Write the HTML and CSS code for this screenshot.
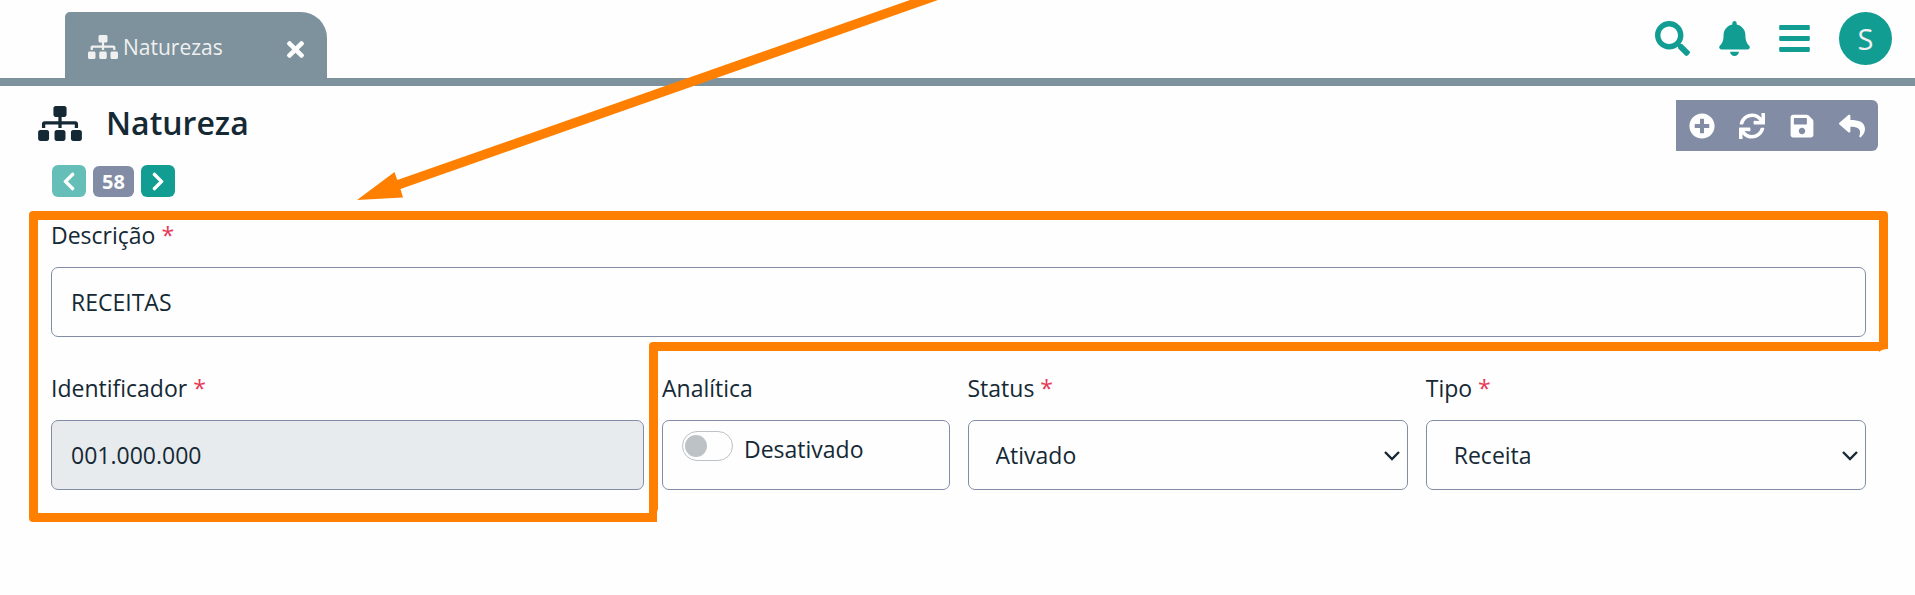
FILE: index.html
```html
<!DOCTYPE html>
<html lang="pt-BR">
<head>
<meta charset="utf-8">
<meta name="viewport" content="width=device-width, initial-scale=1">
<title>Natureza</title>
<link rel="stylesheet" href="styles.css">
</head>
<body>
<svg class="sprite" aria-hidden="true">
  <symbol id="i-sitemap" viewBox="0 0 640 512"><path d="M128 352H32c-17.67 0-32 14.33-32 32v96c0 17.67 14.33 32 32 32h96c17.67 0 32-14.33 32-32v-96c0-17.67-14.33-32-32-32zm-24-80h192v48h48v-48h192v48h48v-57.59c0-21.17-17.23-38.41-38.41-38.41H344v-64h40c17.67 0 32-14.33 32-32V32c0-17.67-14.33-32-32-32H256c-17.67 0-32 14.33-32 32v96c0 17.67 14.33 32 32 32h40v64H94.41C73.23 224 56 241.23 56 262.41V320h48v-48zm264 80h-96c-17.67 0-32 14.33-32 32v96c0 17.67 14.33 32 32 32h96c17.67 0 32-14.33 32-32v-96c0-17.67-14.33-32-32-32zm240 0h-96c-17.67 0-32 14.33-32 32v96c0 17.67 14.33 32 32 32h96c17.67 0 32-14.33 32-32v-96c0-17.67-14.33-32-32-32z"/></symbol>
  <symbol id="i-times" viewBox="0 0 352 512"><path d="M242.72 256l100.07-100.07c12.28-12.28 12.28-32.19 0-44.48l-22.24-22.24c-12.28-12.28-32.19-12.28-44.48 0L176 189.28 75.93 89.21c-12.28-12.28-32.19-12.28-44.48 0L9.21 111.45c-12.28 12.28-12.28 32.19 0 44.48L109.28 256 9.21 356.07c-12.28 12.28-12.28 32.19 0 44.48l22.24 22.24c12.28 12.28 32.2 12.28 44.48 0L176 322.72l100.07 100.07c12.28 12.28 32.2 12.28 44.48 0l22.24-22.24c12.28-12.28 12.28-32.19 0-44.48L242.72 256z"/></symbol>
  <symbol id="i-search" viewBox="0 0 512 512"><path d="M505 442.7L405.3 343c-4.5-4.5-10.6-7-17-7H372c27.6-35.3 44-79.7 44-128C416 93.1 322.9 0 208 0S0 93.1 0 208s93.1 208 208 208c48.3 0 92.7-16.4 128-44v16.3c0 6.4 2.5 12.5 7 17l99.7 99.7c9.4 9.4 24.6 9.4 33.9 0l28.3-28.3c9.4-9.4 9.4-24.6.1-34zM208 336c-70.7 0-128-57.2-128-128 0-70.7 57.2-128 128-128 70.7 0 128 57.2 128 128 0 70.7-57.2 128-128 128z"/></symbol>
  <symbol id="i-bell" viewBox="0 0 448 512"><path d="M224 512c35.32 0 63.97-28.65 63.97-64H160.03c0 35.35 28.65 64 63.97 64zm215.39-149.71c-19.32-20.76-55.47-51.99-55.47-154.29 0-77.7-54.48-139.9-127.94-155.16V32c0-17.67-14.32-32-31.98-32s-31.98 14.33-31.98 32v20.84C118.56 68.1 64.08 130.3 64.08 208c0 102.3-36.15 133.53-55.47 154.29-6 6.45-8.66 14.16-8.61 21.71.11 16.4 12.98 32 32.1 32h383.8c19.12 0 32-15.6 32.1-32 .05-7.55-2.61-15.27-8.61-21.71z"/></symbol>
  <symbol id="i-bars" viewBox="0 0 448 512"><path d="M16 132h416c8.837 0 16-7.163 16-16V76c0-8.837-7.163-16-16-16H16C7.163 60 0 67.163 0 76v40c0 8.837 7.163 16 16 16zm0 160h416c8.837 0 16-7.163 16-16v-40c0-8.837-7.163-16-16-16H16c-8.837 0-16 7.163-16 16v40c0 8.837 7.163 16 16 16zm0 160h416c8.837 0 16-7.163 16-16v-40c0-8.837-7.163-16-16-16H16c-8.837 0-16 7.163-16 16v40c0 8.837 7.163 16 16 16z"/></symbol>
  <symbol id="i-plus" viewBox="0 0 512 512"><path d="M256 8C119 8 8 119 8 256s111 248 248 248 248-111 248-248S393 8 256 8zm144 276c0 6.6-5.4 12-12 12h-92v92c0 6.6-5.4 12-12 12h-56c-6.6 0-12-5.4-12-12v-92h-92c-6.6 0-12-5.4-12-12v-56c0-6.6 5.4-12 12-12h92v-92c0-6.6 5.4-12 12-12h56c6.6 0 12 5.4 12 12v92h92c6.6 0 12 5.4 12 12v56z"/></symbol>
  <symbol id="i-sync" viewBox="0 0 512 512"><path d="M440.65 12.57l4 82.77A247.16 247.16 0 0 0 255.83 8C134.73 8 33.91 94.92 12.29 209.82A12 12 0 0 0 24.09 224h49.05a12 12 0 0 0 11.67-9.26 175.91 175.91 0 0 1 317-56.94l-101.46-4.86a12 12 0 0 0-12.57 12v47.41a12 12 0 0 0 12 12H500a12 12 0 0 0 12-12V12a12 12 0 0 0-12-12h-47.37a12 12 0 0 0-11.98 12.57zM255.83 432a175.61 175.61 0 0 1-146-77.8l101.8 4.87a12 12 0 0 0 12.57-12v-47.4a12 12 0 0 0-12-12H12a12 12 0 0 0-12 12V500a12 12 0 0 0 12 12h47.35a12 12 0 0 0 12-12.6l-4.15-82.57A247.17 247.17 0 0 0 255.83 504c121.11 0 221.93-86.92 243.55-201.82a12 12 0 0 0-11.8-14.18h-49.05a12 12 0 0 0-11.67 9.26A175.86 175.86 0 0 1 255.83 432z"/></symbol>
  <symbol id="i-save" viewBox="0 0 448 512"><path d="M433.941 129.941l-83.882-83.882A48 48 0 0 0 316.118 32H48C21.49 32 0 53.49 0 80v352c0 26.51 21.49 48 48 48h352c26.51 0 48-21.49 48-48V163.882a48 48 0 0 0-14.059-33.941zM224 416c-35.346 0-64-28.654-64-64 0-35.346 28.654-64 64-64s64 28.654 64 64c0 35.346-28.654 64-64 64zm96-304.52V212c0 6.627-5.373 12-12 12H76c-6.627 0-12-5.373-12-12V108c0-6.627 5.373-12 12-12h228.52c3.183 0 6.235 1.264 8.485 3.515l3.48 3.48A11.996 11.996 0 0 1 320 111.48z"/></symbol>
  <symbol id="i-reply" viewBox="0 0 512 512"><path d="M8.309 189.836L184.313 37.851C199.719 24.546 224 35.347 224 56.015v80.053c160.629 1.839 288 34.032 288 186.258 0 61.441-39.581 122.309-83.333 154.132-13.653 9.931-33.111-2.533-28.077-18.631 45.344-145.012-21.507-183.51-176.59-185.742V360c0 20.7-24.3 31.453-39.687 18.164l-176.004-152c-11.071-9.562-11.086-26.753 0-36.328z"/></symbol>
  <symbol id="i-prev" viewBox="0 0 320 512"><path d="M34.52 239.03L228.87 44.69c9.37-9.37 24.57-9.37 33.94 0l22.67 22.67c9.36 9.36 9.37 24.52.04 33.9L131.49 256l154.02 154.75c9.34 9.38 9.32 24.54-.04 33.9l-22.67 22.67c-9.37 9.37-24.57 9.37-33.94 0L34.52 272.97c-9.37-9.37-9.37-24.57 0-33.94z"/></symbol>
  <symbol id="i-next" viewBox="0 0 320 512"><path transform="matrix(-1 0 0 1 320 0)" d="M34.52 239.03L228.87 44.69c9.37-9.37 24.57-9.37 33.94 0l22.67 22.67c9.36 9.36 9.37 24.52.04 33.9L131.49 256l154.02 154.75c9.34 9.38 9.32 24.54-.04 33.9l-22.67 22.67c-9.37 9.37-24.57 9.37-33.94 0L34.52 272.97c-9.37-9.37-9.37-24.57 0-33.94z"/></symbol>
  <symbol id="i-down" viewBox="0 0 16 10"><path d="M1 1l7 7 7-7" fill="none" stroke="currentColor" stroke-width="2.4"/></symbol>
</svg>

<header class="topbar">
  <div class="tab">
    <a class="tab-link" href="#"><svg class="tab-icon"><use href="#i-sitemap"/></svg>Naturezas</a>
    <button class="tab-close" type="button" aria-label="Fechar"><svg class="close-icon"><use href="#i-times"/></svg></button>
  </div>
  <nav class="tools">
    <button class="tool" type="button" aria-label="Pesquisar"><svg class="icon-wide"><use href="#i-search"/></svg></button>
    <button class="tool" type="button" aria-label="Notificações"><svg class="icon-slim"><use href="#i-bell"/></svg></button>
    <button class="tool" type="button" aria-label="Menu"><svg class="icon-slim"><use href="#i-bars"/></svg></button>
    <button class="avatar" type="button">S</button>
  </nav>
</header>

<main class="page">
  <div class="heading">
    <h1 class="title"><svg class="title-icon"><use href="#i-sitemap"/></svg>Natureza</h1>
    <div class="actions">
      <button class="action" type="button" aria-label="Adicionar"><svg class="action-icon"><use href="#i-plus"/></svg></button>
      <button class="action" type="button" aria-label="Atualizar"><svg class="action-icon"><use href="#i-sync"/></svg></button>
      <button class="action" type="button" aria-label="Salvar"><svg class="action-icon"><use href="#i-save"/></svg></button>
      <button class="action" type="button" aria-label="Voltar"><svg class="action-icon"><use href="#i-reply"/></svg></button>
    </div>
  </div>

  <div class="pager">
    <button class="page-btn page-btn-muted" type="button" aria-label="Anterior"><svg class="page-icon"><use href="#i-prev"/></svg></button>
    <span class="page-count">58</span>
    <button class="page-btn" type="button" aria-label="Próximo"><svg class="page-icon"><use href="#i-next"/></svg></button>
  </div>

  <form class="form">
    <div class="field field-full">
      <label class="label" for="descricao">Descrição <span class="req">*</span></label>
      <input class="control" id="descricao" type="text" value="RECEITAS">
    </div>
    <div class="field">
      <label class="label" for="identificador">Identificador <span class="req">*</span></label>
      <input class="control control-readonly" id="identificador" type="text" value="001.000.000" readonly>
    </div>
    <div class="field">
      <span class="label" id="analitica-label">Analítica</span>
      <div class="control switch-box">
        <input class="switch" id="analitica" type="checkbox" role="switch">
        <label class="switch-text" for="analitica">Desativado</label>
      </div>
    </div>
    <div class="field">
      <label class="label" for="status">Status <span class="req">*</span></label>
      <div class="select-wrap">
        <select class="control select" id="status"><option>Ativado</option><option>Desativado</option></select>
        <svg class="caret"><use href="#i-down"/></svg>
      </div>
    </div>
    <div class="field">
      <label class="label" for="tipo">Tipo <span class="req">*</span></label>
      <div class="select-wrap">
        <select class="control select" id="tipo"><option>Receita</option><option>Despesa</option></select>
        <svg class="caret"><use href="#i-down"/></svg>
      </div>
    </div>
  </form>
</main>

<svg class="callout" viewBox="0 0 1915 595" aria-hidden="true">
  <path class="callout-arrow" d="M357 200L394.500 172L397.300 180L910 0H938L400.500 189L403 197.500Z"/>
  <path class="callout-arrow" d="M33 211H1884Q1888 211 1888 215V349Q1882 349 1879 352V351H658V509L657 512V522H33Q29 522 29 518V215Q29 211 33 211ZM38 220V513H649V346Q649 342 653 342H1879V220Z"/>
</svg>
</body>
</html>
```
FILE: styles.css
```css
* {
  box-sizing: border-box;
}

body {
  position: relative;
  min-height: 100vh;
  margin: 0;
  background: #fefefe;
  color: #152935;
  font-family: "Segoe UI", "Open Sans", "Noto Sans", sans-serif;
  font-size: 23px;
  line-height: 36px;
}

button {
  margin: 0;
  padding: 0;
  border: 0;
  background: none;
  color: inherit;
  font: inherit;
  cursor: pointer;
}

svg {
  display: block;
  fill: currentColor;
}

.sprite {
  position: absolute;
  width: 0;
  height: 0;
}

/* Top bar */
.topbar {
  display: flex;
  justify-content: space-between;
  align-items: flex-start;
  padding: 12px 23px 0 65px;
  border-bottom: 8px solid #7d929c;
}

.tab {
  display: flex;
  justify-content: space-between;
  align-items: center;
  width: 262px;
  height: 66px;
  padding: 0 23px;
  border-radius: 5px 26px 0 0;
  background: #7d929c;
  color: #f0f0f0;
}

.tab-link {
  display: flex;
  align-items: center;
  gap: 5px;
  padding-top: 4px;
  color: inherit;
  font-size: 21px;
  text-decoration: none;
}

.tab-icon {
  width: 30px;
  height: 24px;
}

.tab-close {
  padding-top: 9px;
  color: #fefefe;
}

.close-icon {
  width: 17px;
  height: 25px;
}

.tools {
  display: flex;
  align-items: center;
  gap: 29px;
  color: #129d93;
}

.icon-wide {
  width: 35px;
  height: 35px;
}

.icon-slim {
  width: 31px;
  height: 35px;
}

.avatar {
  width: 53px;
  height: 53px;
  border-radius: 50%;
  background: #129d93;
  color: #f0f0f0;
  font-size: 29px;
}

/* Page heading */
.page {
  padding: 14px 37px 32px 38px;
}

.heading {
  display: flex;
  justify-content: space-between;
  align-items: flex-start;
}

.title {
  display: flex;
  align-items: center;
  gap: 24px;
  margin: 0;
  font-size: 32px;
  font-weight: 600;
  line-height: 46px;
}

.title-icon {
  width: 44px;
  height: 35px;
}

.actions {
  display: flex;
  align-items: center;
  height: 51px;
  padding: 0 1px;
  border-radius: 0 6px 6px 0;
  background: #828da5;
  color: #fefefe;
}

.action {
  padding: 0 12px;
}

.action-icon {
  width: 26px;
  height: 26px;
}

/* Record pager */
.pager {
  display: flex;
  align-items: center;
  gap: 7px;
  padding: 14px 14px 0;
}

.page-btn {
  display: flex;
  justify-content: center;
  align-items: center;
  width: 34px;
  height: 32px;
  border-radius: 6px;
  background: #129d93;
  color: #fefefe;
}

.page-btn-muted {
  background: #65bfb8;
}

.page-icon {
  width: 14px;
  height: 21px;
}

.page-count {
  padding: 0 9px;
  border-radius: 6px;
  background: #828da5;
  color: #fefefe;
  font-size: 20px;
  font-weight: 700;
  line-height: 31px;
}

/* Form */
.form {
  display: grid;
  grid-template-columns: 4fr 2fr 3fr 3fr;
  row-gap: 33px;
  padding: 20px 3px 0 4px;
}

.field {
  display: flex;
  flex-direction: column;
  gap: 14px;
  min-width: 0;
  padding: 0 9px;
}

.field-full {
  grid-column: 1 / -1;
}

.req {
  color: #e63757;
}

.control {
  width: 100%;
  height: 70px;
  margin: 0;
  padding: 0 19px;
  border: 1px solid #828da5;
  border-radius: 7px;
  background: #fefefe;
  color: inherit;
  font: inherit;
}

.control-readonly {
  background: #e8ebee;
}

.select-wrap {
  position: relative;
}

.select {
  display: block;
  padding: 0 27px;
  appearance: none;
}

.caret {
  position: absolute;
  top: 31px;
  right: 8px;
  width: 16px;
  height: 10px;
  pointer-events: none;
}

.switch-box {
  display: flex;
  align-items: flex-start;
  gap: 11px;
  padding-top: 10px;
}

.switch {
  display: flex;
  align-items: center;
  width: 51px;
  height: 30px;
  margin: 0;
  padding: 0 2px;
  border: 1px solid #bdc2c7;
  border-radius: 15px;
  background: #fefefe;
  appearance: none;
}

.switch::before {
  width: 22px;
  height: 22px;
  border-radius: 50%;
  background: #bdc2c7;
  content: "";
}

.switch:checked {
  justify-content: flex-end;
}

/* Callout drawn over the page */
.callout {
  position: absolute;
  top: 0;
  left: 0;
  width: 100%;
  pointer-events: none;
}

.callout-arrow {
  fill: #ff8000;
  fill-rule: evenodd;
}
```
